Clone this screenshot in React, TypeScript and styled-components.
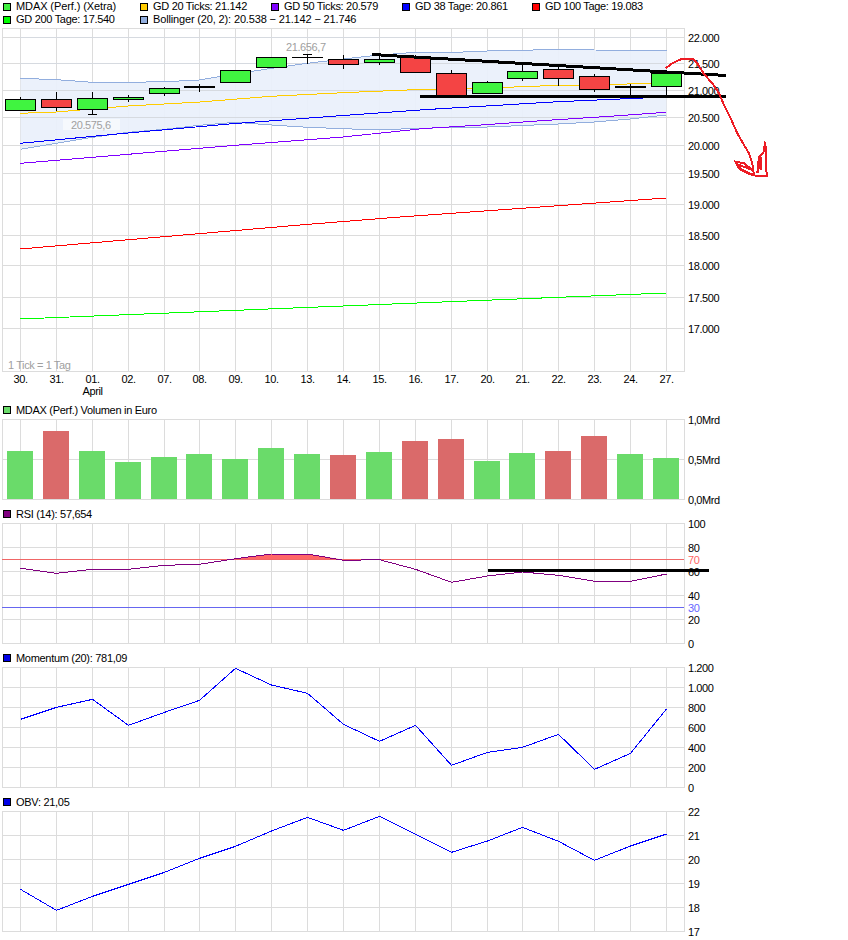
import React from 'react';
import styled, { createGlobalStyle } from 'styled-components';

const GlobalStyle = createGlobalStyle`
  html, body {
    margin: 0;
    padding: 0;
    background: #fff;
  }
  #root {
    width: 848px;
  }
`;

const FONT = `"Liberation Sans", Arial, sans-serif`;
const GRID = [20, 56, 92, 128, 164, 199, 235, 271, 307, 343, 379, 415, 451, 487, 522, 558, 594, 630, 666];
const LEFT = 2;
const RIGHT = 684;

const toPoints = (ys: number[]) => ys.map((y, i) => `${GRID[i] + 0.5},${y}`).join(' ');
const zoomed = (zs: number[], base: number) => zs.map((z) => base + z / 3);

const legend = [
  { color: '#40f040', label: 'MDAX (Perf.) (Xetra)', spacing: -0.1 },
  { color: '#ffcc00', label: 'GD 20 Ticks: 21.142' },
  { color: '#7f00ff', label: 'GD 50 Ticks: 20.579' },
  { color: '#0000ff', label: 'GD 38 Tage: 20.861' },
  { color: '#ff0000', label: 'GD 100 Tage: 19.083', spacing: -0.35 },
  { color: '#00ff00', label: 'GD 200 Tage: 17.540' },
  { color: '#92aede', label: 'Bollinger (20, 2): 20.538 − 21.142 − 21.746', spacing: -0.15 },
];

const UP = '#40f440';
const DOWN = '#f44444';

type Candle = { top: number; bottom: number; high: number; low: number; fill?: string; doji?: number };

const candles: Candle[] = [
  { top: 99, bottom: 110, high: 97, low: 110, fill: UP },
  { top: 99, bottom: 107, high: 92, low: 110, fill: DOWN },
  { top: 98, bottom: 109, high: 92, low: 114, fill: UP },
  { top: 97, bottom: 99, high: 95, low: 101, fill: UP },
  { top: 88, bottom: 93, high: 87, low: 95, fill: UP },
  { top: 87, bottom: 87, high: 84, low: 91, doji: 2 },
  { top: 70, bottom: 82, high: 70, low: 82, fill: UP },
  { top: 57, bottom: 67, high: 57, low: 67, fill: UP },
  { top: 57, bottom: 57, high: 54, low: 63, doji: 1 },
  { top: 59, bottom: 64, high: 55, low: 68, fill: DOWN },
  { top: 59, bottom: 62, high: 55, low: 64, fill: UP },
  { top: 57, bottom: 72, high: 55, low: 72, fill: DOWN },
  { top: 73, bottom: 95, high: 70, low: 95, fill: DOWN },
  { top: 82, bottom: 93, high: 81, low: 93, fill: UP },
  { top: 71, bottom: 78, high: 65, low: 80, fill: UP },
  { top: 69, bottom: 78, high: 66, low: 85, fill: DOWN },
  { top: 76, bottom: 89, high: 74, low: 91, fill: DOWN },
  { top: 87, bottom: 87, high: 84, low: 96, doji: 2 },
  { top: 73, bottom: 86, high: 71, low: 96, fill: UP },
];

const bollUpper = [78.3, 79.7, 82.3, 82.3, 81.7, 80, 74, 68.3, 63.3, 59, 55, 52.3, 52.5, 51, 50.3, 49.3, 50, 50.3, 50.3];
const bollLower = [149.3, 143.3, 137.3, 132.3, 129.3, 125.3, 122.3, 125, 127.3, 128.7, 130, 128.3, 127.7, 127, 125.5, 124, 122, 119, 115];

const maLines = [
  { color: '#ffcc00', points: '20,113.3 56,112 128,106 200,102 271,96.3 343,92.7 424,89.3 507,87.3 558,85.3 610,84.7 651,83 666,82' },
  { color: '#0000ff', points: '20,143.3 128,133 235,123.5 343,115.5 424,109.7 558,101.7 666,97' },
  { color: '#7f00ff', points: '20,163.3 128,154.3 235,145.3 343,137 424,128.5 477,125.3 541,120.7 604,116.7 666,112.3' },
  { color: '#ff0000', points: '20,249 300,225 400,217 666,198' },
  { color: '#00ff00', points: '20,319 666,293' },
];

// red pen stroke, read off a 3x crop starting at x=424
const penStroke = [
  [725, 205], [745, 190], [770, 178], [805, 176], [820, 190], [840, 222], [865, 250], [885, 280], [900, 315],
  [920, 355], [940, 400], [960, 435], [975, 460], [985, 490], [990, 525], [965, 515], [945, 505], [935, 485],
  [960, 490], [985, 510], [945, 495], [950, 510], [975, 522], [1000, 528], [1028, 528], [1024, 425], [1018, 460],
  [1005, 470], [1000, 520], [1012, 470], [1010, 510],
].map(([x, y]) => `${424 + x / 3},${y / 3}`).join(' ');

const dates: [string, string?][] = [
  ['30.'], ['31.'], ['01.', 'April'], ['02.'], ['07.'], ['08.'], ['09.'], ['10.'], ['13.'], ['14.'], ['15.'], ['16.'],
  ['17.'], ['20.'], ['21.'], ['22.'], ['23.'], ['24.'], ['27.'],
];

const mainAxis: [string, number][] = [
  ['22.000', 37], ['21.500', 63], ['21.000', 90], ['20.500', 117], ['20.000', 145], ['19.500', 173],
  ['19.000', 204], ['18.500', 235], ['18.000', 265], ['17.500', 297], ['17.000', 328],
];

const volumeBars: [number, boolean][] = [
  [451, true], [431, false], [451, true], [462, true], [457, true], [454, true], [459, true], [448, true], [454, true],
  [455, false], [452, true], [441, false], [439, false], [461, true], [453, true], [451, false], [436, false], [454, true], [458, true],
];

const rsiLine = [568.3, 573.3, 569.3, 569.3, 565.3, 564.3, 558.7, 554, 554, 560.3, 559.7, 569.3, 582.3, 576, 572, 575.3, 581.3, 581.3, 574];
const momentumLine = zoomed([238, 202, 178, 256, 217, 181, 85, 135, 160, 253, 304, 256, 376, 337, 322, 283, 388, 340, 207], 640);
const obvLine = zoomed([748, 811, 769, 733, 697, 655, 619, 573, 532, 571, 529, 583, 637, 603, 562, 604, 661, 618, 582], 640);

const Page = styled.div`
  width: 848px;
  font-family: ${FONT};
  color: #000;
`;

const Legend = styled.div`
  display: grid;
  grid-template-columns: 137px 131px 131px 130px 131px;
  grid-auto-rows: 13px;
  height: 27px;
  padding: 0 0 1px 3px;
  box-sizing: border-box;
`;

const LegendItem = styled.div<{ $wide?: boolean }>`
  display: flex;
  align-items: center;
  gap: 5px;
  white-space: nowrap;
  grid-column: ${(p) => (p.$wide ? 'span 3' : 'span 1')};
`;

const Swatch = styled.span<{ $color: string }>`
  width: 6px;
  height: 6px;
  flex: none;
  background: ${(p) => p.$color};
  border: 1px solid #000;
`;

const Label = styled.span<{ $spacing?: number }>`
  font-size: 11px;
  line-height: 13px;
  letter-spacing: ${(p) => p.$spacing ?? -0.3}px;
`;

const PaneTitle = styled.div`
  display: flex;
  align-items: center;
  gap: 5px;
  height: 18px;
  padding-left: 3px;
`;

const PaneSvg = styled.svg`
  display: block;
  overflow: visible;
`;

const AxisText = styled.text<{ $color?: string }>`
  font-family: ${FONT};
  font-size: 11px;
  letter-spacing: -0.4px;
  fill: ${(p) => p.$color || '#000'};
`;

const Line = styled.line<{ $color?: string; $width?: number }>`
  stroke: ${(p) => p.$color || '#dcdcdc'};
  stroke-width: ${(p) => p.$width || 1}px;
  shape-rendering: crispEdges;
`;

const Trace = styled.polyline<{ $color: string; $width?: number }>`
  fill: none;
  stroke: ${(p) => p.$color};
  stroke-width: ${(p) => p.$width || 1}px;
  shape-rendering: crispEdges;
`;

function Pane({ top, height, children }: { top: number; height: number; children: React.ReactNode }) {
  return (
    <PaneSvg width={848} height={height} viewBox={`0 ${top} 848 ${height}`}>
      {children}
    </PaneSvg>
  );
}

function Frame({ top, bottom, rows }: { top: number; bottom: number; rows: number[] }) {
  return (
    <g>
      {[top, ...rows, bottom].map((y) => (
        <Line key={y} x1={LEFT} x2={RIGHT + 1} y1={y + 0.5} y2={y + 0.5} />
      ))}
      {[LEFT, ...GRID, RIGHT].map((x) => (
        <Line key={x} x1={x + 0.5} x2={x + 0.5} y1={top} y2={bottom + 1} />
      ))}
    </g>
  );
}

function AxisLabels({ items }: { items: [string, number, string?][] }) {
  return (
    <g>
      {items.map(([text, y, color]) => (
        <AxisText key={text} x={688} y={y + 4} $color={color}>
          {text}
        </AxisText>
      ))}
    </g>
  );
}

function Title({ color, children }: { color: string; children: React.ReactNode }) {
  return (
    <PaneTitle>
      <Swatch $color={color} />
      <Label>{children}</Label>
    </PaneTitle>
  );
}

function CandleMark({ c, x }: { c: Candle; x: number }) {
  const dojiY = c.top + (c.doji === 1 ? 0.5 : 0);
  return (
    <g>
      <Line $color="#000" x1={x + 0.5} x2={x + 0.5} y1={c.high} y2={c.low + 1} />
      {c.doji ? (
        <Line $color="#000" $width={c.doji} x1={x - 15} x2={x + 16} y1={dojiY} y2={dojiY} />
      ) : (
        <rect x={x - 14.5} y={c.top + 0.5} width={30} height={c.bottom - c.top} fill={c.fill} stroke="#000" shapeRendering="crispEdges" />
      )}
    </g>
  );
}

function MainChart() {
  const lowerBack = GRID.map((x, i) => `${x + 0.5},${bollLower[i]}`).reverse().join(' ');
  return (
    <Pane top={27} height={374}>
      <Frame top={28} bottom={371} rows={mainAxis.map(([, y]) => y)} />
      <polygon points={`${toPoints(bollUpper)} ${lowerBack}`} fill="#e9f0fb" fillOpacity={0.92} />
      {mainAxis.slice(0, 5).map(([, y]) => (
        <Line key={y} x1={20} x2={666} y1={y + 0.5} y2={y + 0.5} $color="#d6dae0" />
      ))}
      <Trace points={toPoints(bollUpper)} $color="#92aede" />
      <Trace points={toPoints(bollLower)} $color="#92aede" />
      {maLines.map((m) => (
        <Trace key={m.color} points={m.points} $color={m.color} />
      ))}
      {candles.map((c, i) => (
        <CandleMark key={i} c={c} x={GRID[i]} />
      ))}
      <Line $color="#000" x1={88} x2={97} y1={114.5} y2={114.5} />
      <Line $color="#000" x1={303} x2={312} y1={54.5} y2={54.5} />
      <rect x={63} y={119} width={57} height={11} fill="#fff" fillOpacity={0.55} />
      <AxisText x={71} y={129} $color="#a0a0a0">20.575,6</AxisText>
      <AxisText x={286} y={51} $color="#a0a0a0">21.656,7</AxisText>
      <AxisText x={8} y={369} $color="#a0a0a0">1 Tick = 1 Tag</AxisText>
      {dates.map(([day, month], i) => (
        <g key={i}>
          <AxisText x={GRID[i] + 0.5} y={383} textAnchor="middle">{day}</AxisText>
          {month && <AxisText x={GRID[i] + 0.5} y={395} textAnchor="middle">{month}</AxisText>}
        </g>
      ))}
      <AxisLabels items={mainAxis.map(([text, y]) => [text, y + 1])} />
      <Line $color="#000" $width={3} x1={372} x2={726} y1={54.5} y2={75.5} />
      <Line $color="#000" $width={3} x1={420} x2={726} y1={96.5} y2={96.5} />
      <Trace points={penStroke} $color="#ed1c24" $width={2} />
    </Pane>
  );
}

function VolumeChart() {
  return (
    <Pane top={419} height={86}>
      <Frame top={419} bottom={499} rows={[459]} />
      {volumeBars.map(([top, up], i) => (
        <rect key={i} x={GRID[i] - 13} y={top} width={26} height={499 - top} fill={up ? '#6adb6a' : '#da6a6a'} />
      ))}
      <AxisLabels items={[['1,0Mrd', 420], ['0,5Mrd', 460], ['0,0Mrd', 500]]} />
    </Pane>
  );
}

function RsiChart() {
  return (
    <Pane top={523} height={126}>
      <Frame top={523} bottom={643} rows={[547, 571, 595, 619]} />
      <polygon points="231,559 235.5,558.7 271.5,554 307.5,554 339,559" fill="#ff6666" />
      <Line $color="#f06666" x1={LEFT} x2={RIGHT} y1={559.5} y2={559.5} />
      <Line $color="#6666f0" x1={LEFT} x2={RIGHT} y1={607.5} y2={607.5} />
      <Trace points={toPoints(rsiLine)} $color="#800080" />
      <AxisLabels
        items={[
          ['100', 524], ['80', 548], ['70', 560, '#ff6666'], ['60', 572], ['40', 596], ['30', 608, '#6666ff'], ['20', 620], ['0', 644],
        ]}
      />
      <Line $color="#000" $width={3} x1={488} x2={709} y1={570.5} y2={570.5} />
    </Pane>
  );
}

function MomentumChart() {
  return (
    <Pane top={667} height={126}>
      <Frame top={667} bottom={787} rows={[687, 707, 727, 747, 767]} />
      <Trace points={toPoints(momentumLine)} $color="#0000ff" />
      <AxisLabels
        items={[['1.200', 668], ['1.000', 688], ['800', 708], ['600', 728], ['400', 748], ['200', 768], ['0', 788]]}
      />
    </Pane>
  );
}

function ObvChart() {
  return (
    <Pane top={811} height={126}>
      <Frame top={811} bottom={931} rows={[835, 859, 883, 907]} />
      <Trace points={toPoints(obvLine)} $color="#0000ff" />
      <AxisLabels items={[['22', 812], ['21', 836], ['20', 860], ['19', 884], ['18', 908], ['17', 932]]} />
    </Pane>
  );
}

export default function App() {
  return (
    <Page>
      <GlobalStyle />
      <Legend>
        {legend.map((item, i) => (
          <LegendItem key={item.label} $wide={i === 6}>
            <Swatch $color={item.color} />
            <Label $spacing={item.spacing}>{item.label}</Label>
          </LegendItem>
        ))}
      </Legend>
      <MainChart />
      <Title color="#6adb6a">MDAX (Perf.) Volumen in Euro</Title>
      <VolumeChart />
      <Title color="#800080">RSI (14): 57,654</Title>
      <RsiChart />
      <Title color="#0000e6">Momentum (20): 781,09</Title>
      <MomentumChart />
      <Title color="#0000e6">OBV: 21,05</Title>
      <ObvChart />
    </Page>
  );
}
